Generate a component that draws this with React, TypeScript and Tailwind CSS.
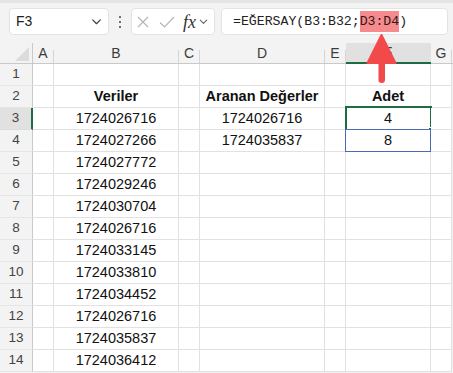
import React from 'react';

const COLS = [
  { key: 'A', w: 'w-[21px]' },
  { key: 'B', w: 'w-[125px]' },
  { key: 'C', w: 'w-[21px]' },
  { key: 'D', w: 'w-[125px]' },
  { key: 'E', w: 'w-[21px]' },
  { key: 'F', w: 'w-[85px]' },
  { key: 'G', w: 'w-[21px]' },
];

const veriler = [
  '1724026716',
  '1724027266',
  '1724027772',
  '1724029246',
  '1724030704',
  '1724026716',
  '1724033145',
  '1724033810',
  '1724034452',
  '1724026716',
  '1724035837',
  '1724036412',
];

type Cell = { text?: string; bold?: boolean };

function rowData(r: number): Record<string, Cell> {
  const d: Record<string, Cell> = {};
  if (r === 2) {
    d.B = { text: 'Veriler', bold: true };
    d.D = { text: 'Aranan Değerler', bold: true };
    d.F = { text: 'Adet', bold: true };
  }
  if (r >= 3) d.B = { text: veriler[r - 3] };
  if (r === 3) {
    d.D = { text: '1724026716' };
    d.F = { text: '4' };
  }
  if (r === 4) {
    d.D = { text: '1724035837' };
    d.F = { text: '8' };
  }
  return d;
}

function Chevron({ className }: { className?: string }) {
  return (
    <svg viewBox="0 0 12 12" className={className} fill="none" stroke="currentColor" strokeWidth="1.2">
      <path d="M2.5 4.5 L6 8 L9.5 4.5" strokeLinecap="round" strokeLinejoin="round" />
    </svg>
  );
}

function Toolbar() {
  return (
    <div className="h-[43px] flex flex-col">
      <div className="h-[3px] bg-[#e4e4e4]" />
      <div className="mt-[5px] h-[27px] flex items-stretch">
        <div className="ml-[9px] w-[100px] rounded-[4px] border border-[#e3e3e3] bg-white flex items-center pl-[6px] pr-[5px] text-[14px] text-[#222]">
          <span className="flex-1">F3</span>
          <Chevron className="w-[13px] h-[13px] text-[#444]" />
        </div>
        <div className="w-[22px] flex flex-col items-center justify-center gap-[3px]">
          <span className="w-[2px] h-[2px] rounded-full bg-[#444]" />
          <span className="w-[2px] h-[2px] rounded-full bg-[#444]" />
          <span className="w-[2px] h-[2px] rounded-full bg-[#444]" />
        </div>
        <div className="w-[84px] rounded-[4px] border border-[#e3e3e3] bg-white flex items-center pl-[4px]">
          <svg viewBox="0 0 14 14" className="w-[14px] h-[14px] text-[#b4b4b4]" fill="none" stroke="currentColor" strokeWidth="1.1">
            <path d="M2 2 L12 12 M12 2 L2 12" />
          </svg>
          <svg viewBox="0 0 16 14" className="ml-[9px] w-[16px] h-[14px] text-[#b4b4b4]" fill="none" stroke="currentColor" strokeWidth="1.1">
            <path d="M1 7.5 L5.5 12 L15 2" />
          </svg>
          <span className="ml-[8px] text-[18px] italic text-[#333] leading-none" style={{ fontFamily: '"Liberation Serif", serif' }}>
            fx
          </span>
          <Chevron className="ml-[2px] w-[11px] h-[11px] text-[#666]" />
        </div>
        <div className="ml-[6px] w-[227px] rounded-[4px] border border-[#e3e3e3] bg-white flex items-center pl-[11px] text-[13.2px] text-[#222]" style={{ fontFamily: '"Liberation Mono", monospace' }}>
          <span className="whitespace-pre">=EĞERSAY(B3:B32;</span>
          <span className="whitespace-pre bg-[#f58b8d] text-[#3a1616] h-[21px] flex items-center">D3:D4</span>
          <span className="whitespace-pre">)</span>
        </div>
      </div>
    </div>
  );
}

function HeaderRow() {
  return (
    <div className="flex h-[21px] border-b border-[#c9c9c9]">
      <div className="w-[33px] flex items-end justify-end pr-[3px] pb-[2px] border-r border-[#c9c9c9]">
        <svg viewBox="0 0 14 14" className="w-[14px] h-[14px]">
          <path d="M14 0 L14 14 L0 14 Z" fill="#dcdcdc" />
        </svg>
      </div>
      {COLS.map((c) => {
        const sel = c.key === 'F';
        return (
          <div
            key={c.key}
            className={`${c.w} flex items-end ${sel ? 'bg-[#e1e1e1] border-b-2 border-[#1e6c41] -mb-px' : ''}`}
          >
            <span className="flex-1 self-center text-center text-[14px] text-[#3c3c3c]">{c.key}</span>
            <span className={`w-px ${sel ? 'h-0' : 'h-[13px]'} bg-[#d4d4d4]`} />
          </div>
        );
      })}
    </div>
  );
}

function SheetRow({ r }: { r: number }) {
  const d = rowData(r);
  const rowSel = r === 3;
  return (
    <div className="flex h-[22px]">
      <div
        className={`w-[33px] flex items-center justify-center text-[13.5px] text-[#444] border-b ${
          rowSel ? 'bg-[#e1e1e1] border-r-2 border-r-[#1e6c41] border-b-[#dcdcdc]' : 'border-r border-r-[#c9c9c9] border-b-[#e6e6e6]'
        }`}
      >
        {r}
      </div>
      {COLS.map((c) => {
        const cell = d[c.key];
        const active = c.key === 'F' && r === 3;
        const ref = c.key === 'F' && r === 4;
        return (
          <div
            key={c.key}
            className={`${c.w} relative bg-white border-r border-b border-[#e1e1e1] flex items-center justify-center text-[14.5px] text-[#111] ${
              cell?.bold ? 'font-bold' : ''
            }`}
          >
            {cell?.text}
            {ref && <div className="absolute left-[-1px] right-[-1px] top-[-1px] bottom-[-1px] border border-[#4a69b6]" />}
            {active && (
              <>
                <div className="absolute left-[-1px] right-[-2px] top-[-2px] bottom-[-2px] border-2 border-[#1e6c41]" />
                <div className="absolute right-[-4px] bottom-[-4px] w-[6px] h-[6px] bg-[#1e6c41] border border-white" />
              </>
            )}
          </div>
        );
      })}
    </div>
  );
}

export default function App() {
  return (
    <div
      className="relative w-[453px] h-[373px] overflow-hidden bg-[#f3f3f3]"
      style={{ fontFamily: '"Liberation Sans", Arial, sans-serif' }}
    >
      <Toolbar />
      <HeaderRow />
      {Array.from({ length: 14 }, (_, i) => (
        <SheetRow key={i} r={i + 1} />
      ))}
      {/* annotation arrow */}
      <svg className="absolute left-0 top-0 pointer-events-none" width="453" height="373" viewBox="0 0 453 373">
        <path d="M381.5 35 L395.5 63 L367.5 63 Z" fill="#f24a4a" stroke="#f24a4a" strokeWidth="2" strokeLinejoin="round" />
        <rect x="378.5" y="58" width="6.5" height="25" rx="3.2" fill="#f24a4a" />
      </svg>
    </div>
  );
}
